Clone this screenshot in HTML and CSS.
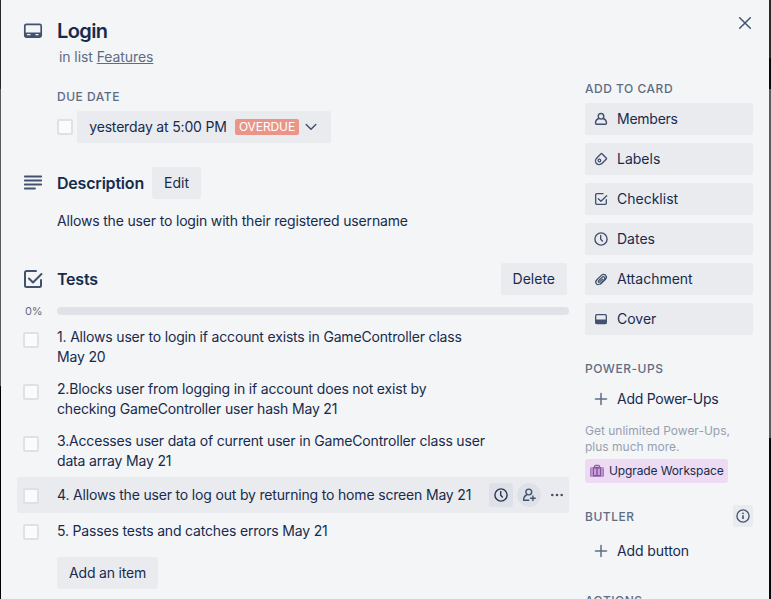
FILE: index.html
```html
<!DOCTYPE html>
<html lang="en">
<head>
<meta charset="utf-8">
<title>Login</title>
<link rel="stylesheet" href="styles.css">
</head>
<body>
<svg class="defs" width="0" height="0">
  <symbol id="check" viewBox="0 0 24 24"><path d="M15 4H5.500A1.500 1.500 0 0 0 4 5.500V18.500A1.500 1.500 0 0 0 5.500 20H18.500A1.500 1.500 0 0 0 20 18.500V13M8 11.500L12 15.500L20.500 7" fill="none" stroke="currentColor" stroke-width="2" stroke-linecap="round" stroke-linejoin="round"/></symbol>
  <symbol id="clock" viewBox="0 0 16 16"><circle cx="8" cy="8" r="6.100" fill="none" stroke="currentColor" stroke-width="1.400"/><path d="M7.700 4.500V8.200L9.400 9.900" fill="none" stroke="currentColor" stroke-width="1.400" stroke-linecap="round"/></symbol>
  <symbol id="plus" viewBox="0 0 16 16"><path d="M8 2.500V13.500M2.500 8H13.500" fill="none" stroke="currentColor" stroke-width="1.500" stroke-linecap="round"/></symbol>
</svg>
<div class="dialog">
  <button class="close" aria-label="Close"><svg viewBox="0 0 16 16" width="16" height="16"><path d="M2.700 2.700L13.300 13.300M13.300 2.700L2.700 13.300" fill="none" stroke="currentColor" stroke-width="1.500" stroke-linecap="round"/></svg></button>
  <main class="main">
    <header class="row title-row">
      <svg class="head-icon" viewBox="0 0 20 20" width="20" height="20"><rect x="1.800" y="3.300" width="16.400" height="12.800" rx="1.600" fill="none" stroke="currentColor" stroke-width="1.700"/><path d="M2 11.500H18V16H2Z" fill="currentColor"/><path d="M4.500 13.700H7M13 13.700H15" stroke="#f4f5f7" stroke-width="1.300" stroke-linecap="round"/></svg>
      <h1>Login</h1>
    </header>
    <p class="in-list">in list <a>Features</a></p>
    <section class="due">
      <h3>DUE DATE</h3>
      <div class="due-row">
        <span class="box"></span>
        <button class="btn due-btn"><span class="due-text">yesterday at 5:00 PM</span><span class="overdue">OVERDUE</span><svg viewBox="0 0 16 16" width="16" height="16"><path d="M3.200 5.500L8 10.200L12.800 5.500" fill="none" stroke="currentColor" stroke-width="1.500" stroke-linecap="round" stroke-linejoin="round"/></svg></button>
      </div>
    </section>
    <section class="description">
      <div class="row">
        <svg class="head-icon" viewBox="0 0 20 20" width="20" height="20"><path d="M1.800 3.500H18.200M1.800 7.500H18.200M1.800 11.500H18.200M1.800 15.500H12" stroke="currentColor" stroke-width="1.800" stroke-linecap="round"/></svg>
        <h2 class="desc-title">Description</h2>
        <button class="btn">Edit</button>
      </div>
      <p class="text">Allows the user to login with their registered username</p>
    </section>
    <section class="tests">
      <div class="row">
        <svg class="head-icon check-head" width="24" height="24"><use href="#check"/></svg>
        <h2>Tests</h2>
        <button class="btn delete">Delete</button>
      </div>
      <div class="progress"><span class="percent">0%</span><span class="bar"></span></div>
      <ul class="items">
        <li><span class="box"></span><span>1. Allows user to login if account exists in GameController class<br>May 20</span></li>
        <li><span class="box"></span><span>2.Blocks user from logging in if account does not exist by<br>checking GameController user hash May 21</span></li>
        <li><span class="box"></span><span>3.Accesses user data of current user in GameController class user<br>data array May 21</span></li>
        <li class="active"><span class="box"></span><span>4. Allows the user to log out by returning to home screen May 21</span>
          <div class="tools">
            <button class="tool"><svg width="16" height="16"><use href="#clock"/></svg></button>
            <button class="tool round"><svg viewBox="0 0 16 16" width="16" height="16"><circle cx="7.800" cy="5" r="2.900" fill="none" stroke="currentColor" stroke-width="1.400"/><path d="M5.600 8C3.500 8.800 2.600 10.600 2.600 13.300H7.800M11.900 9V13.600M9.600 11.300H14.200" fill="none" stroke="currentColor" stroke-width="1.400" stroke-linecap="round" stroke-linejoin="round"/></svg></button>
            <button class="tool plain"><svg viewBox="0 0 16 16" width="16" height="16" fill="currentColor"><circle cx="3.300" cy="8" r="1.300"/><circle cx="8" cy="8" r="1.300"/><circle cx="12.700" cy="8" r="1.300"/></svg></button>
          </div>
        </li>
        <li><span class="box"></span><span>5. Passes tests and catches errors May 21</span></li>
      </ul>
      <button class="btn add-item">Add an item</button>
    </section>
  </main>
  <aside class="sidebar">
    <h3>ADD TO CARD</h3>
    <nav class="actions">
      <button class="btn side"><svg viewBox="0 0 16 16" width="16" height="16"><path d="M5.800 7.500C3.600 8.300 2.500 10 2.500 12.200Q2.500 13.300 3.600 13.300H12.400Q13.500 13.300 13.500 12.200C13.500 10 12.400 8.300 10.200 7.500" fill="none" stroke="currentColor" stroke-width="1.400"/><circle cx="8" cy="5.300" r="2.800" fill="none" stroke="currentColor" stroke-width="1.400"/></svg><span class="members">Members</span></button>
      <button class="btn side"><svg viewBox="0 0 16 16" width="16" height="16"><path d="M8 2.800Q8.600 2.300 9.200 2.900L13.200 6.900Q13.900 7.600 13.200 8.300L9.200 12.300C7.500 14 4.800 14 3.500 12.500C2.100 11 2.200 8.600 3.600 7.200Z" fill="none" stroke="currentColor" stroke-width="1.400"/><circle cx="6.400" cy="9.500" r="1.300" fill="none" stroke="currentColor" stroke-width="1.300"/></svg><span>Labels</span></button>
      <button class="btn side"><svg width="16" height="16"><use href="#check"/></svg><span>Checklist</span></button>
      <button class="btn side"><svg width="16" height="16"><use href="#clock"/></svg><span>Dates</span></button>
      <button class="btn side"><svg viewBox="0 0 16 16" width="16" height="16"><path d="M7.600 13.100L12.500 8.200C15 5.700 11.400 1.400 8.300 4.400L3.900 8.800C.9 11.800 4.500 15.300 7.300 12.600L11.100 8.700C13 6.700 10.800 4.600 9 6.400L5.600 9.800C4.600 10.900 5.700 11.900 6.700 10.900L9.500 8.100" fill="none" stroke="currentColor" stroke-width="1.250" stroke-linecap="round"/></svg><span>Attachment</span></button>
      <button class="btn side"><svg viewBox="0 0 16 16" width="16" height="16"><rect x="2.700" y="3.700" width="10.600" height="8.900" rx="1" fill="none" stroke="currentColor" stroke-width="1.300"/><path d="M2.500 8.500H13.500V12.500H2.500Z" fill="currentColor"/></svg><span>Cover</span></button>
    </nav>
    <h3 class="power">POWER-UPS</h3>
    <button class="btn side ghost"><svg width="16" height="16"><use href="#plus"/></svg><span>Add Power-Ups</span></button>
    <p class="hint">Get unlimited Power-Ups,<br>plus much more.</p>
    <button class="upgrade"><svg viewBox="0 0 16 16" width="16" height="16"><path d="M5.500 4V3.500Q5.500 2.500 6.500 2.500H9.500Q10.500 2.500 10.500 3.500V4" fill="none" stroke="#9261ab" stroke-width="1.300"/><rect x="1" y="4" width="14" height="10" rx="1.500" fill="#a67bbd"/><path d="M3 4V14M13 4V14" stroke="#d6bce2" stroke-width=".8"/><path d="M4 4H12V13H4Z" fill="#87539f"/><path d="M5 5.500H7.300V12H5ZM8.700 5.500H11V12H8.700Z" fill="#c5a0d4"/></svg><span>Upgrade Workspace</span></button>
    <div class="butler"><h3>BUTLER</h3><button class="info"><svg viewBox="0 0 16 16" width="16" height="16"><circle cx="8" cy="8" r="6.100" fill="none" stroke="currentColor" stroke-width="1.300"/><circle cx="8" cy="5.300" r=".9" fill="currentColor"/><path d="M8 7.200V11" stroke="currentColor" stroke-width="1.600"/></svg></button></div>
    <button class="btn side ghost"><svg width="16" height="16"><use href="#plus"/></svg><span class="wide">Add button</span></button>
    <h3 class="last">ACTIONS</h3>
  </aside>
</div>
</body>
</html>
```
FILE: styles.css
```css
* { box-sizing: border-box; }
html, body { height: 100%; }
body {
  margin: 0;
  overflow: hidden;
  display: flex;
  background: linear-gradient(#29272b 0 89px, #59585c 89px 386px, #000 386px) left / 2px 100% no-repeat,
    linear-gradient(#302a25 0 58px, #090909 58px 89px, #5c5b5e 89px 438px, #080808 438px) right / 3px 100% no-repeat;
  font: 14px/20px Inter, "Liberation Sans", sans-serif;
  color: #172b4d;
}
.defs { position: absolute; }
h1, h2, h3, p, ul { margin: 0; padding: 0; }
button { border: 0; padding: 0; font: inherit; color: inherit; background: none; }
svg { display: block; flex: none; color: #42526e; }
.dialog {
  position: relative;
  flex: 1;
  height: 599px;
  margin: 0 2px 0 1px;
  padding: 0 16px;
  display: flex;
  gap: 16px;
  overflow: hidden;
  background: #f4f5f7;
}
.close { position: absolute; top: 15px; right: 16px; }
.main { width: 552px; flex: none; }
.row { display: flex; align-items: center; height: 32px; padding-left: 6px; }
.head-icon { margin-right: 14px; }
.check-head { margin: 0 12px 0 -2px; }
.title-row { margin-top: 15px; }
h1 { font-size: 20px; line-height: 24px; font-weight: 600; letter-spacing: -.6px; }
h2 { font-size: 16px; line-height: 20px; font-weight: 600; letter-spacing: -.2px; }
h3 { font-size: 12px; line-height: 20px; font-weight: 500; letter-spacing: .52px; color: #5e6c84; }
.in-list { padding-left: 42px; color: #5e6c84; letter-spacing: -.08px; }
.in-list a { text-decoration: underline; }
.due { margin: 20px 0 0 40px; }
.due-row { display: flex; align-items: center; gap: 4px; margin-top: 4px; }
.due-text { width: 138px; letter-spacing: -.17px; }
.box { width: 16px; height: 16px; flex: none; background: #fafbfc; border: 2px solid #dfe1e6; border-radius: 2px; }
.btn { height: 32px; padding: 0 12px; border-radius: 3px; background: #eaebef; white-space: nowrap; }
.due-btn { display: flex; align-items: center; width: 254px; }
.overdue { flex: none; margin: 0 4px 0 8px; width: 64px; height: 16px; border-radius: 2px; background: #ec9488; color: #fff; font-size: 12px; line-height: 16px; text-align: center; letter-spacing: -.1px; }
.description { margin-top: 24px; }
.desc-title { width: 87px; margin-right: 8px; white-space: nowrap; }
.text { margin: 12px 0 0 40px; letter-spacing: -.17px; }
.tests { margin-top: 32px; }
.delete { margin: 0 2px 0 auto; }
.progress { display: flex; align-items: center; height: 20px; margin-top: 6px; }
.percent { width: 40px; padding-left: 8px; font-size: 11px; letter-spacing: -.3px; color: #5e6c84; }
.bar { flex: 1; height: 8px; border-radius: 4px; background: #e1e2e8; }
.items { list-style: none; letter-spacing: -.175px; }
.items li { display: flex; align-items: center; min-height: 36px; padding: 6px 0 6px 6px; border-radius: 3px; white-space: nowrap; }
.items .box { align-self: flex-start; margin: 5px 18px 0 0; }
.items .active { height: 36px; background: #eaebef; }
.tools { display: flex; gap: 4px; margin-left: auto; }
.tool { width: 24px; height: 24px; display: grid; place-items: center; border-radius: 3px; background: #dfe1e8; }
.tool svg { color: #253858; }
.tool.round { border-radius: 50%; }
.tool.round svg, .tool.plain svg { color: #42526e; }
.tool.plain { background: none; }
.add-item { width: 101px; margin: 8px 0 0 40px; letter-spacing: -.17px; }
.sidebar { width: 168px; flex: none; padding-top: 79px; }
.actions { display: grid; gap: 8px; margin-top: 4px; }
.side { display: flex; align-items: center; gap: 8px; width: 168px; padding: 0 8px; }
.members { letter-spacing: -.25px; }
.ghost { background: none; letter-spacing: -.25px; }
.ghost svg { color: #5e6c84; }
.wide { letter-spacing: -.1px; }
.power { margin-top: 24px; }
.power + .ghost { margin-top: 4px; }
.hint { margin-top: 8px; font-size: 12px; line-height: 16px; color: #97a0af; }
.upgrade { display: flex; align-items: center; gap: 4px; width: 143px; height: 24px; margin-top: 4px; padding-left: 4px; border-radius: 3px; background: #eddbf4; font-size: 12px; letter-spacing: -.12px; white-space: nowrap; }
.butler { display: flex; align-items: flex-end; justify-content: space-between; height: 22px; margin-top: 22px; }
.info { width: 20px; height: 22px; display: grid; place-items: center; border-radius: 3px; background: #eaebef; }
.butler + .ghost { margin-top: 8px; }
.last { margin-top: 24px; }
```
